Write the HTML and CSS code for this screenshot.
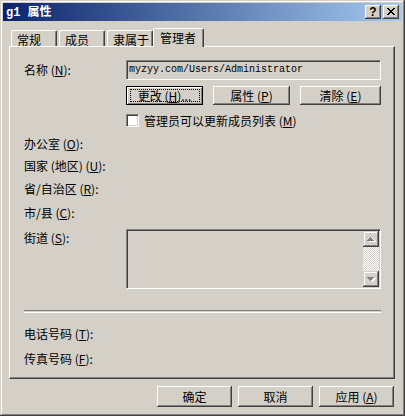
FILE: index.html
```html
<!DOCTYPE html>
<html lang="zh-CN">
<head>
<meta charset="utf-8">
<title>g1 属性</title>
<link rel="stylesheet" href="styles.css">
</head>
<body>
<div class="window">
  <div class="titlebar">
    <span class="title"><span class="gname">g1</span>属性</span>
    <div class="tb-buttons">
      <span class="tb-btn help">?</span>
      <span class="tb-btn close">
        <svg width="16" height="14" viewBox="0 0 16 14" shape-rendering="crispEdges">
          <path d="M4 3h2v1h1v1h2V4h1V3h2v1h-1v1h-1v1h-1v1h1v1h1v1h1v1h-2V9h-1V8H7v1H6v1H4V9h1V8h1V7h1V6H6V5H5V4H4z" fill="#000"/>
        </svg>
      </span>
    </div>
  </div>
  <div class="body">
    <div class="tabs">
      <div class="tab">常规</div>
      <div class="tab">成员</div>
      <div class="tab">隶属于</div>
      <div class="tab active">管理者</div>
    </div>
    <div class="panel">
      <div class="row row-name">
        <span class="lbl">名称 (<u>N</u>):</span>
        <div class="field">myzyy.com/Users/Administrator</div>
      </div>
      <div class="btn-row">
        <button class="btn small default w77"><span class="focus"></span>更改 (<u>H</u>)...</button>
        <button class="btn small w77">属性 (<u>P</u>)</button>
        <button class="btn small w81">清除 (<u>E</u>)</button>
      </div>
      <div class="check-row">
        <span class="checkbox"></span>
        <span>管理员可以更新成员列表 (<u>M</u>)</span>
      </div>
      <div class="row r-office"><span class="lbl">办公室 (<u>O</u>):</span></div>
      <div class="row r-country"><span class="lbl">国家 (地区) (<u>U</u>):</span></div>
      <div class="row r-state"><span class="lbl">省/自治区 (<u>R</u>):</span></div>
      <div class="row r-city"><span class="lbl">市/县 (<u>C</u>):</span></div>
      <div class="row r-street">
        <span class="lbl top">街道 (<u>S</u>):</span>
        <div class="memo">
          <div class="vscroll">
            <span class="sbtn">
              <svg width="16" height="16" viewBox="0 0 16 16" shape-rendering="crispEdges">
                <path d="M5 10h7v-1h-1v-1h-1v-1h-1v-1h-1v1h-1v1h-1v1h-1z" fill="#fff" transform="translate(1,1)"/>
                <path d="M4 10h7v-1h-1v-1h-1v-1h-1v-1h-1v1h-1v1h-1v1h-1z" fill="#808080"/>
              </svg>
            </span>
            <span class="track"></span>
            <span class="sbtn">
              <svg width="16" height="16" viewBox="0 0 16 16" shape-rendering="crispEdges">
                <path d="M5 6h7v1h-1v1h-1v1h-1v1h-1v-1h-1v-1h-1v-1h-1z" fill="#fff" transform="translate(1,1)"/>
                <path d="M4 6h7v1h-1v1h-1v1h-1v1h-1v-1h-1v-1h-1v-1h-1z" fill="#808080"/>
              </svg>
            </span>
          </div>
        </div>
      </div>
      <div class="sep"></div>
      <div class="row r-phone"><span class="lbl">电话号码 (<u>T</u>):</span></div>
      <div class="row r-fax"><span class="lbl">传真号码 (<u>F</u>):</span></div>
    </div>
    <div class="footer">
      <button class="btn big">确定</button>
      <button class="btn big">取消</button>
      <button class="btn big">应用 (<u>A</u>)</button>
    </div>
  </div>
</div>
</body>
</html>
```
FILE: styles.css
```css
html, body {
  margin: 0;
  padding: 0;
  background: #d4d0c8;
}
body {
  font-family: "Noto Sans CJK SC", "Liberation Sans", sans-serif;
  font-size: 12px;
  color: #000;
}
u {
  text-decoration: underline;
  text-underline-offset: 1px;
}
.window {
  width: 405px;
  height: 416px;
  box-sizing: border-box;
  padding: 3px;
  background: #d4d0c8;
  box-shadow: inset -1px -1px #404040, inset 1px 1px #d4d0c8,
              inset -2px -2px #808080, inset 2px 2px #fff;
}
.titlebar {
  height: 18px;
  display: flex;
  align-items: center;
  justify-content: space-between;
  padding: 0 3px 0 3px;
  background: linear-gradient(to right, #0a246a, #a6caf0);
  color: #fff;
  font-weight: bold;
}
.title {
  line-height: 18px;
  font-size: 12px;
}
.gname {
  margin-right: 7px;
  font-family: "Liberation Mono", monospace;
}
.tb-buttons {
  display: flex;
  gap: 2px;
}
.tb-btn {
  width: 16px;
  height: 14px;
  box-sizing: border-box;
  background: #d4d0c8;
  box-shadow: inset -1px -1px #404040, inset 1px 1px #fff, inset -2px -2px #808080;
  color: #000;
  display: flex;
  align-items: center;
  justify-content: center;
  font-family: "Liberation Sans", sans-serif;
  font-size: 12px;
  line-height: 14px;
}
.tb-btn svg { display: block; }
.body {
  padding: 7px 7px 0 6px;
}
.tabs {
  display: flex;
  align-items: flex-end;
  height: 18px;
  padding-left: 2px;
}
.tab {
  width: 46px;
  height: 16px;
  box-sizing: border-box;
  margin-right: 2px;
  border-top: 1px solid #fff;
  border-left: 1px solid #fff;
  border-right: 1px solid #404040;
  box-shadow: inset -1px 0 #808080;
  border-radius: 2px 2px 0 0;
  padding: 1px 0 0 5px;
  line-height: 15px;
  white-space: nowrap;
}
.tab.active {
  position: relative;
  z-index: 1;
  width: 51px;
  height: 19px;
  margin-left: -2px;
  margin-bottom: -1px;
  padding: 0 0 0 6px;
  line-height: 17px;
  background: #d4d0c8;
}
.panel {
  height: 333px;
  box-sizing: border-box;
  border: 1px solid;
  border-color: #fff #404040 #404040 #fff;
  box-shadow: inset -1px -1px #808080;
  padding: 13px 12px 0 14px;
}
.row {
  display: grid;
  grid-template-columns: 102px 255px;
  align-items: center;
  height: 20px;
}
.lbl {
  white-space: nowrap;
  line-height: 18px;
}
.lbl.top { align-self: start; }
.field {
  height: 20px;
  box-sizing: border-box;
  border: 1px solid;
  border-color: #808080 #fff #fff #808080;
  box-shadow: inset 1px 1px #404040, inset -1px -1px #d4d0c8;
  padding: 0 0 0 2px;
  font-family: "Liberation Mono", monospace;
  font-size: 10px;
  line-height: 18px;
  white-space: nowrap;
  overflow: hidden;
}
.btn-row {
  display: flex;
  justify-content: space-between;
  width: 255px;
  margin: 6px 0 0 102px;
}
.btn {
  position: relative;
  box-sizing: border-box;
  border: none;
  padding: 0;
  margin: 0;
  background: #d4d0c8;
  color: #000;
  font-family: inherit;
  font-size: 12px;
  box-shadow: inset -1px -1px #404040, inset 1px 1px #fff, inset -2px -2px #808080;
  white-space: nowrap;
}
.btn.small { height: 19px; line-height: 17px; }
.btn.w77 { width: 77px; }
.btn.w81 { width: 81px; }
.btn.default {
  box-shadow: inset 0 0 0 1px #000, inset 2px 2px #fff, inset -2px -2px #808080;
}
.focus {
  position: absolute;
  left: 4px;
  right: 3px;
  top: 3px;
  bottom: 3px;
  border: 1px dotted #000;
}
.check-row {
  display: flex;
  align-items: center;
  gap: 5px;
  height: 13px;
  margin: 9px 0 0 102px;
  white-space: nowrap;
  line-height: 13px;
}
.checkbox {
  width: 13px;
  height: 13px;
  box-sizing: border-box;
  background: #fff;
  border: 1px solid;
  border-color: #808080 #fff #fff #808080;
  box-shadow: inset 1px 1px #404040, inset -1px -1px #d4d0c8;
  flex: none;
}
.r-office { margin-top: 7px; }
.r-country { margin-top: 2px; }
.r-state { margin-top: 3px; }
.r-city { margin-top: 4px; }
.r-street {
  margin-top: 6px;
  height: 60px;
  align-items: start;
}
.memo {
  height: 60px;
  box-sizing: border-box;
  border: 1px solid;
  border-color: #808080 #fff #fff #808080;
  box-shadow: inset 1px 1px #404040, inset -1px -1px #d4d0c8;
  padding: 1px;
  display: flex;
  justify-content: flex-end;
}
.vscroll {
  width: 16px;
  display: flex;
  flex-direction: column;
}
.sbtn {
  width: 16px;
  height: 16px;
  flex: none;
  background: #d4d0c8;
  box-shadow: inset -1px -1px #404040, inset 1px 1px #d4d0c8,
              inset -2px -2px #808080, inset 2px 2px #fff;
}
.sbtn svg { display: block; }
.track {
  flex: 1;
  background-color: #d4d0c8;
  background-image: repeating-conic-gradient(#fff 0 25%, #d4d0c8 0 50%);
  background-size: 2px 2px;
}
.sep {
  width: 357px;
  height: 1px;
  margin-top: 21px;
  border-top: 1px solid #808080;
  border-bottom: 1px solid #fff;
}
.r-phone { margin-top: 11px; }
.r-fax { margin-top: 5px; }
.footer {
  display: flex;
  justify-content: flex-end;
  gap: 6px;
  margin-top: 7px;
  padding-right: 1px;
}
.btn.big {
  width: 75px;
  height: 21px;
  line-height: 19px;
}
```
